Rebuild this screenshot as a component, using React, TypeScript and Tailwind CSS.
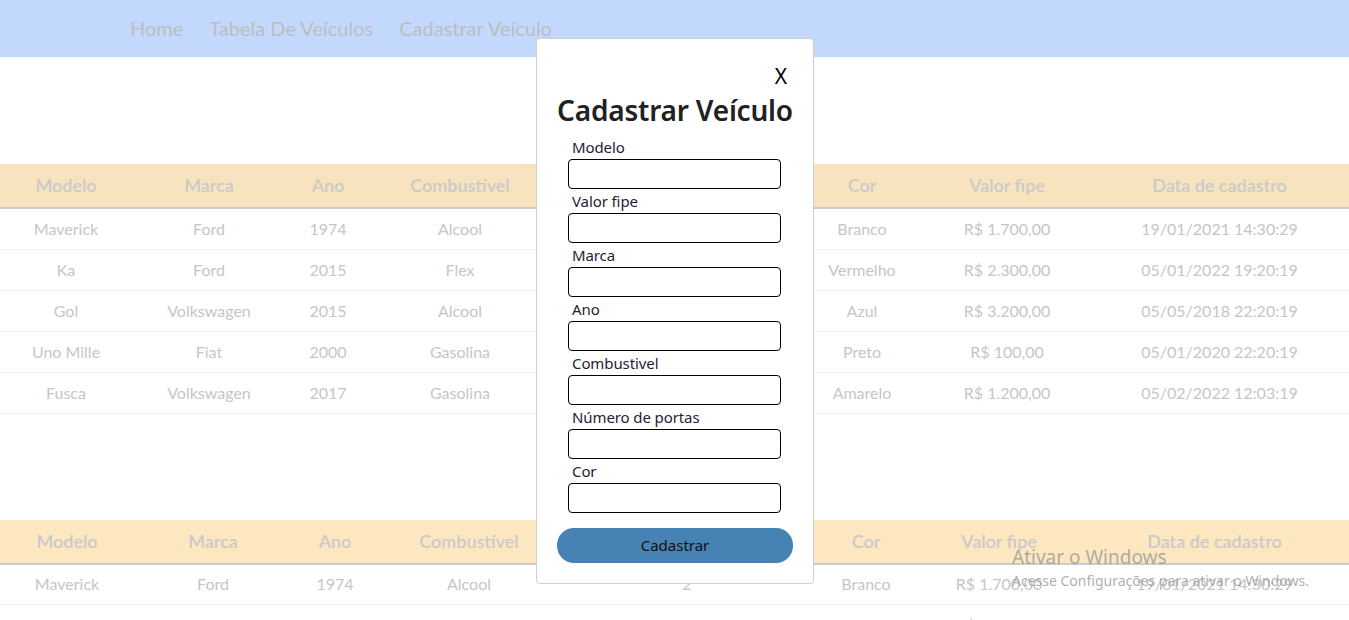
import React from "react"

interface Veiculo {
    modelo: string
    marca: string
    ano: string
    combustivel: string
    portas: string
    cor: string
    valor: string
    data: string
}

const veiculos: Veiculo[] = [
    { modelo: "Maverick", marca: "Ford", ano: "1974", combustivel: "Alcool", portas: "2", cor: "Branco", valor: "R$ 1.700,00", data: "19/01/2021 14:30:29" },
    { modelo: "Ka", marca: "Ford", ano: "2015", combustivel: "Flex", portas: "4", cor: "Vermelho", valor: "R$ 2.300,00", data: "05/01/2022 19:20:19" },
    { modelo: "Gol", marca: "Volkswagen", ano: "2015", combustivel: "Alcool", portas: "4", cor: "Azul", valor: "R$ 3.200,00", data: "05/05/2018 22:20:19" },
    { modelo: "Uno Mille", marca: "Fiat", ano: "2000", combustivel: "Gasolina", portas: "2", cor: "Preto", valor: "R$ 100,00", data: "05/01/2020 22:20:19" },
    { modelo: "Fusca", marca: "Volkswagen", ano: "2017", combustivel: "Gasolina", portas: "2", cor: "Amarelo", valor: "R$ 1.200,00", data: "05/02/2022 12:03:19" },
]

const colunas = ["Modelo", "Marca", "Ano", "Combustível", "Número de portas", "Cor", "Valor fipe", "Data de cadastro"]

const campos = ["Modelo", "Valor fipe", "Marca", "Ano", "Combustivel", "Número de portas", "Cor"]

function Tabela({ rows, widths, headBg }: { rows: Veiculo[]; widths: number[]; headBg: string }) {
    return (
        <table className="w-full table-fixed border-collapse" style={{ fontFamily: "Lato, 'Open Sans', sans-serif" }}>
            <colgroup>
                {widths.map((w, i) => (
                    <col key={i} style={{ width: w }} />
                ))}
            </colgroup>
            <thead>
                <tr className={`${headBg} h-[44px] border-b-2 border-[#cbcbcb]`}>
                    {colunas.map((c) => (
                        <th key={c} className="text-[18px] font-semibold text-[#cacaca] whitespace-nowrap">{c}</th>
                    ))}
                </tr>
            </thead>
            <tbody>
                {rows.map((v) => (
                    <tr key={v.modelo} className="h-[41px] border-b border-[#f2f2f2] text-[16px] text-[#c6c6c6] text-center">
                        <td>{v.modelo}</td>
                        <td>{v.marca}</td>
                        <td>{v.ano}</td>
                        <td>{v.combustivel}</td>
                        <td>{v.portas}</td>
                        <td>{v.cor}</td>
                        <td>{v.valor}</td>
                        <td>{v.data}</td>
                    </tr>
                ))}
            </tbody>
        </table>
    )
}

function Modal() {
    return (
        <div className="absolute left-[536px] top-[38px] w-[278px] h-[546px] bg-white border border-[#cfcfcf] rounded-[4px] flex flex-col" style={{ fontFamily: "'Noto Sans', 'Open Sans', sans-serif" }}>
            <div className="flex justify-end pr-[26px] pt-[24px] h-[51px]">
                <button className="text-[21px] leading-none text-black">X</button>
            </div>
            <h1 className="text-center text-[28px] font-semibold text-[#212121] leading-[40px] tracking-[-0.2px]">Cadastrar Veículo</h1>
            <form className="flex flex-col pl-[31px] mt-[7px]">
                {campos.map((c) => (
                    <div key={c} className="flex flex-col h-[54px]">
                        <label className="pl-[4px] text-[15px] leading-[20px] text-[#1f2233] tracking-[-0.1px]">{c}</label>
                        <input className="w-[213px] h-[30px] mt-[2px] border-[1.5px] border-black rounded-[4px] bg-white" />
                    </div>
                ))}
            </form>
            <div className="flex justify-center mt-[13px]">
                <button className="w-[236px] h-[35px] rounded-[17px] bg-[#4682b4] text-[15px] text-[#111]">Cadastrar</button>
            </div>
        </div>
    )
}

export default function App() {
    return (
        <div className="relative w-[1349px] h-[620px] overflow-hidden bg-white">
            <header className="h-[57px] bg-[#c2d9fd] flex items-center pl-[130px] gap-[26px] pb-[1px]" style={{ fontFamily: "Lato, 'Open Sans', sans-serif" }}>
                <a className="text-[20px] text-[#bdbdbd]">Home</a>
                <a className="text-[20px] text-[#bdbdbd]">Tabela De Veículos</a>
                <a className="text-[20px] text-[#bdbdbd]">Cadastrar Veículo</a>
            </header>

            <section className="mt-[107px]">
                <Tabela rows={veiculos} widths={[132, 154, 84, 180, 250, 124, 166, 259]} headBg="bg-[#f8e3bf]" />
            </section>

            <section className="mt-[106px]">
                <Tabela rows={veiculos} widths={[134, 158, 86, 182, 254, 104, 162, 269]} headBg="bg-[#fde7c0]" />
            </section>

            <Modal />

            <div className="absolute left-[1012px] top-[544px] text-[#9a9a9a]/80 pointer-events-none" style={{ fontFamily: "'Noto Sans', 'Open Sans', sans-serif" }}>
                <p className="text-[19px] leading-[26px]">Ativar o Windows</p>
                <p className="text-[14px] leading-[20px] mt-[1px]">Acesse Configurações para ativar o Windows.</p>
            </div>
        </div>
    )
}
